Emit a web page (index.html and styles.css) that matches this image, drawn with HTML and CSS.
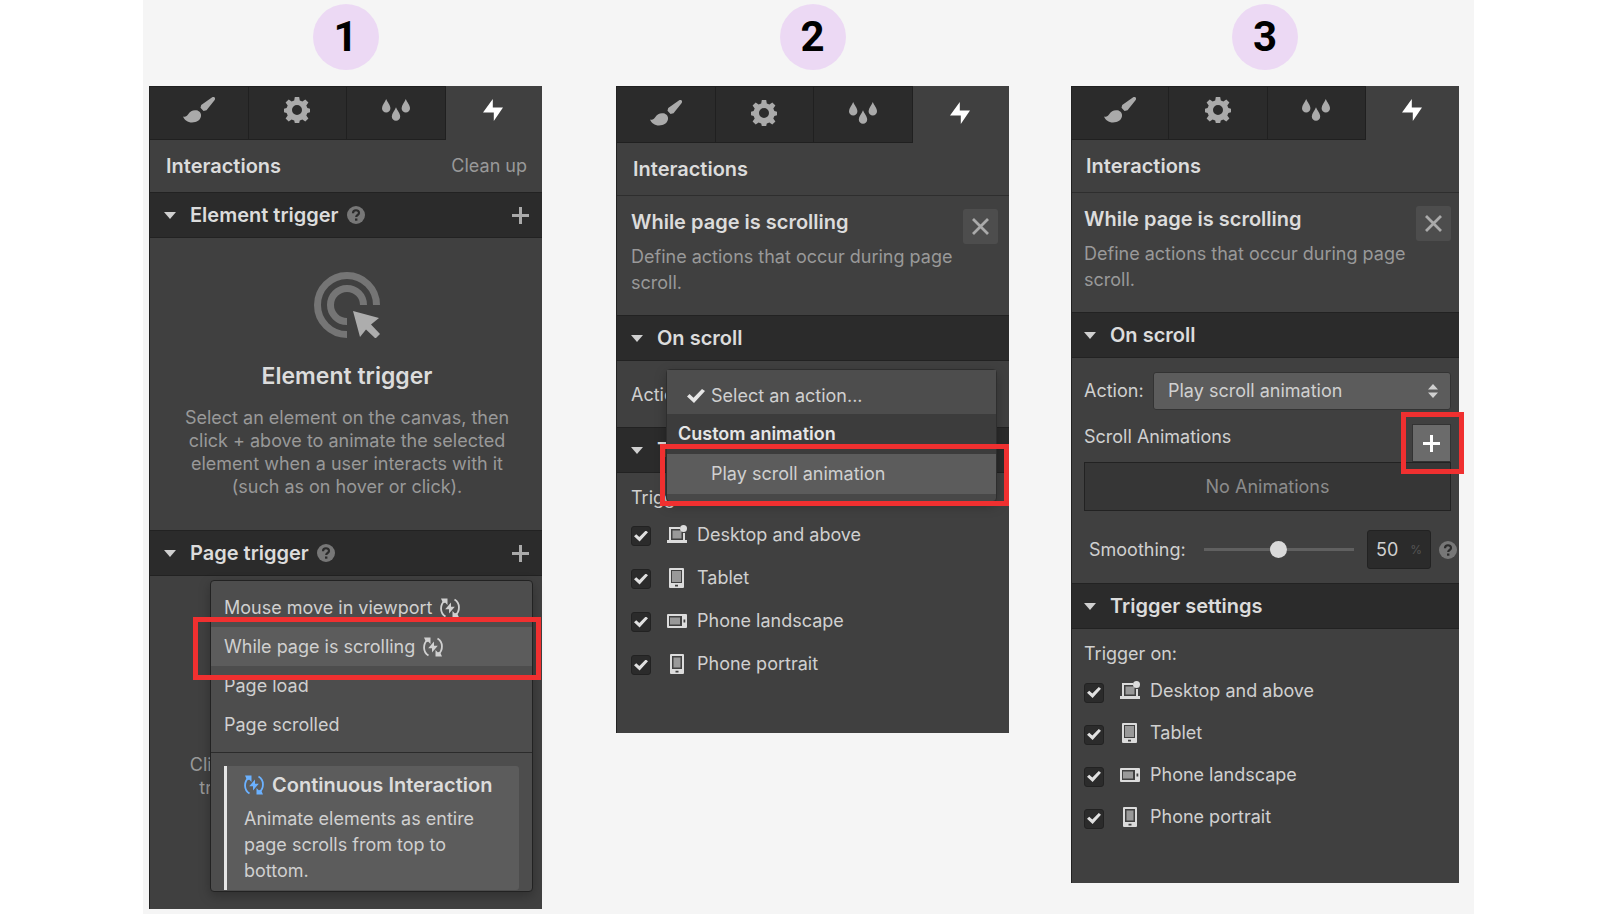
FILE: index.html
```html
<!DOCTYPE html>
<html lang="en">
<head>
  <meta charset="UTF-8">
  <meta name="viewport" content="width=device-width, initial-scale=1">
  <title>Interactions: while page is scrolling</title>
  <link rel="stylesheet" href="styles.css">
</head>
<body>

<!-- Shared icons -->
<svg class="sprite" aria-hidden="true">
  <symbol id="brush" viewBox="0 0 32 26">
    <path d="M31 0c1.600.8 1.200 2.200.5 3.200L23.500 13.200l-3 .8-3-3.200.7-2.700L28.500.8C29.300.1 30.200-.3 31 0z"/>
    <path d="M0 19.500c2.500.8 3.800-.2 5.200-2.200 2-3.300 5-4.600 8.200-4 3.600.7 5 3.500 4.600 6-.6 3.800-4.200 6.200-9 6.200-4.300 0-7.600-2.400-9-6z"/>
  </symbol>
  <symbol id="gear" viewBox="0 0 26 26">
    <path fill-rule="evenodd" d="M10.800 0h4.400l.6 3.500 2.600 1.100 2.900-2.100 3.100 3.100-2.100 2.900 1.100 2.600 2.600.6v3.600l-2.600.6-1.100 2.600 2.100 2.900-3.100 3.100-2.900-2.100-2.600 1.100-.6 2.500h-4.400l-.6-2.500-2.600-1.100-2.900 2.100-3.100-3.100 2.100-2.900-1.100-2.600-2.600-.6v-3.600l2.600-.6 1.100-2.600-2.100-2.900 3.100-3.100 2.900 2.100 2.600-1.100zM13 8a5 5 0 1 0 0 10 5 5 0 0 0 0-10z"/>
  </symbol>
  <symbol id="drops" viewBox="0 0 28 22">
    <path d="M4.200 0C5.500 3.500 8.400 6 8.400 9.300a4.200 4.300 0 0 1-8.400 0C0 6 2.900 3.500 4.200 0z"/>
    <path d="M14 8.200c1.300 3.500 4.200 6 4.200 9.300a4.200 4.300 0 0 1-8.400 0c0-3.300 2.900-5.800 4.200-9.300z"/>
    <path d="M23.800 0C25.100 3.500 28 6 28 9.300a4.200 4.300 0 0 1-8.400 0c0-3.300 2.900-5.800 4.200-9.300z"/>
  </symbol>
  <symbol id="bolt" viewBox="0 0 20 22">
    <path d="M9.800 0v8.500H20L10.800 22v-8.500H0z"/>
  </symbol>
  <symbol id="caret" viewBox="0 0 12 7">
    <path d="M0 0h12L6 7z"/>
  </symbol>
  <symbol id="plus" viewBox="0 0 17 17">
    <path d="M7 0h3v7h7v3h-7v7H7v-7H0V7h7z"/>
  </symbol>
  <symbol id="help" viewBox="0 0 18 18">
    <circle cx="9" cy="9" r="9" fill="#777"/>
    <path d="M6 7.200C6 3.300 12 3.300 12 7c0 2-2.800 2-2.800 4" fill="none" stroke="#2b2b2b" stroke-width="2.200"/>
    <path d="M8 12.500h2.400v2.200H8z" fill="#2b2b2b"/>
  </symbol>
  <symbol id="close" viewBox="0 0 17 17">
    <path d="M1 1l15 15M16 1L1 16" fill="none" stroke="currentColor" stroke-width="2.800"/>
  </symbol>
  <symbol id="tick" viewBox="0 0 18 14">
    <path d="M0 7.500L2.500 5l4 3.800L15 0l3 2L7 14z"/>
  </symbol>
  <symbol id="continuous" viewBox="0 0 20 20">
    <path d="M5.500 18.500C-.5 15 0 6.500 4.500 3M14.500 1.500c6 3.500 5.500 12 1 15.500" fill="none" stroke="currentColor" stroke-width="1.800"/>
    <path d="M1 .5h6.500V7L5.300 4.800 3 5zM19 19.500h-6.500V13l2.200 2.200L17 15z"/>
    <path d="M11 4.500v4.300h3.800L9 15.500v-4.300H5.200z"/>
  </symbol>
  <symbol id="desktop" viewBox="0 0 20 20">
    <path d="M2 2h11v2H4v11h12V8h2v7h2v3H0v-3h2z"/>
    <path d="M5.500 5.500h9v8h-9z" fill="#999"/>
    <circle cx="16.500" cy="3.500" r="3.500"/>
  </symbol>
  <symbol id="tablet" viewBox="0 0 20 20">
    <path fill-rule="evenodd" d="M3 0h13q1 0 1 1v18q0 1-1 1H3q-1 0-1-1V1q0-1 1-1zm1 2v13h11V2zm4 14.800v1.600h3v-1.600z"/>
    <path d="M5 3h9v11H5z" fill="#999"/>
  </symbol>
  <symbol id="landscape" viewBox="0 0 20 20">
    <path fill-rule="evenodd" d="M1 3h18q1 0 1 1v12q0 1-1 1H1q-1 0-1-1V4q0-1 1-1zm1 2v10h13V5zm14.500 3.500v3h1.800v-3z"/>
    <path d="M3 6.500h10v7H3z" fill="#999"/>
  </symbol>
  <symbol id="portrait" viewBox="0 0 20 20">
    <path fill-rule="evenodd" d="M4 0h12q1 0 1 1v18q0 1-1 1H4q-1 0-1-1V1q0-1 1-1zm1 2v13h10V2zm3.500 14.800v1.600h3v-1.600z"/>
    <path d="M6.500 3.500h7v10h-7z" fill="#999"/>
  </symbol>
</svg>

<main class="stage">

  <!-- Step 1 -->
  <section class="step step-one">
    <h2 class="badge">1</h2>
    <div class="panel">
      <nav class="tabs">
        <button class="tab" aria-label="Style"><svg class="icon-brush"><use href="#brush"/></svg></button>
        <button class="tab" aria-label="Settings"><svg class="icon-gear"><use href="#gear"/></svg></button>
        <button class="tab" aria-label="Effects"><svg class="icon-drops"><use href="#drops"/></svg></button>
        <button class="tab active" aria-label="Interactions"><svg class="icon-bolt"><use href="#bolt"/></svg></button>
      </nav>
      <div class="panel-title">
        <h3>Interactions</h3>
        <button class="clean-up">Clean up</button>
      </div>

      <div class="section-bar">
        <svg class="icon-caret"><use href="#caret"/></svg>
        <h4>Element trigger</h4>
        <svg class="icon-help"><use href="#help"/></svg>
        <button class="add" aria-label="Add element trigger"><svg class="icon-plus"><use href="#plus"/></svg></button>
      </div>
      <div class="empty">
        <svg class="target" viewBox="0 0 66 66">
          <path d="M33 62.500A29.500 29.500 0 1 1 62.500 33M33 49.500A16.500 16.500 0 1 1 49.500 33" fill="none" stroke="#757575" stroke-width="7"/>
          <path d="M39 39l26 7-8 6.500 9 9.500-4.500 4.500-9.500-9-6 7.500z" fill="#adadad"/>
        </svg>
        <h5>Element trigger</h5>
        <p>Select an element on the canvas, then click + above to animate the selected element when a user interacts with it (such as on hover or click).</p>
      </div>

      <div class="section-bar">
        <svg class="icon-caret"><use href="#caret"/></svg>
        <h4>Page trigger</h4>
        <svg class="icon-help"><use href="#help"/></svg>
        <button class="add" aria-label="Add page trigger"><svg class="icon-plus"><use href="#plus"/></svg></button>
      </div>
      <div class="page-trigger">
        <p class="hint">Click + above to animate the page or<br>trigger it when a user scrolls down</p>
        <div class="trigger-menu">
          <div class="trigger-list">
            <button class="trigger-item">Mouse move in viewport <svg class="icon-loop"><use href="#continuous"/></svg></button>
            <button class="trigger-item selected marked">While page is scrolling <svg class="icon-loop"><use href="#continuous"/></svg></button>
            <button class="trigger-item">Page load</button>
            <button class="trigger-item">Page scrolled</button>
          </div>
          <div class="info">
            <h5><svg class="icon-loop"><use href="#continuous"/></svg> Continuous Interaction</h5>
            <p>Animate elements as entire page scrolls from top to bottom.</p>
          </div>
        </div>
      </div>
    </div>
  </section>

  <!-- Step 2 -->
  <section class="step step-two">
    <h2 class="badge">2</h2>
    <div class="panel">
      <nav class="tabs">
        <button class="tab" aria-label="Style"><svg class="icon-brush"><use href="#brush"/></svg></button>
        <button class="tab" aria-label="Settings"><svg class="icon-gear"><use href="#gear"/></svg></button>
        <button class="tab" aria-label="Effects"><svg class="icon-drops"><use href="#drops"/></svg></button>
        <button class="tab active" aria-label="Interactions"><svg class="icon-bolt"><use href="#bolt"/></svg></button>
      </nav>
      <div class="panel-title">
        <h3>Interactions</h3>
      </div>
      <div class="about">
        <div>
          <h4>While page is scrolling</h4>
          <p>Define actions that occur during page scroll.</p>
        </div>
        <button class="close" aria-label="Close"><svg class="icon-plus"><use href="#close"/></svg></button>
      </div>

      <div class="section-bar">
        <svg class="icon-caret"><use href="#caret"/></svg>
        <h4>On scroll</h4>
      </div>
      <div class="action-open">
        <span>Action:</span>
        <div class="action-menu" role="listbox" aria-label="Action">
          <button class="action-item first" role="option" aria-selected="true"><svg class="icon-tick"><use href="#tick"/></svg>Select an action...</button>
          <div class="action-group">Custom animation</div>
          <button class="action-item selected marked" role="option" aria-selected="false">Play scroll animation</button>
        </div>
      </div>

      <div class="section-bar">
        <svg class="icon-caret"><use href="#caret"/></svg>
        <h4>Trigger settings</h4>
      </div>
      <div class="devices">
        <p>Trigger on:</p>
        <label><input type="checkbox" checked><svg class="icon-loop"><use href="#desktop"/></svg>Desktop and above</label>
        <label><input type="checkbox" checked><svg class="icon-loop"><use href="#tablet"/></svg>Tablet</label>
        <label><input type="checkbox" checked><svg class="icon-loop"><use href="#landscape"/></svg>Phone landscape</label>
        <label><input type="checkbox" checked><svg class="icon-loop"><use href="#portrait"/></svg>Phone portrait</label>
      </div>
    </div>
  </section>

  <!-- Step 3 -->
  <section class="step step-three">
    <h2 class="badge">3</h2>
    <div class="panel">
      <nav class="tabs">
        <button class="tab" aria-label="Style"><svg class="icon-brush"><use href="#brush"/></svg></button>
        <button class="tab" aria-label="Settings"><svg class="icon-gear"><use href="#gear"/></svg></button>
        <button class="tab" aria-label="Effects"><svg class="icon-drops"><use href="#drops"/></svg></button>
        <button class="tab active" aria-label="Interactions"><svg class="icon-bolt"><use href="#bolt"/></svg></button>
      </nav>
      <div class="panel-title">
        <h3>Interactions</h3>
      </div>
      <div class="about">
        <div>
          <h4>While page is scrolling</h4>
          <p>Define actions that occur during page scroll.</p>
        </div>
        <button class="close" aria-label="Close"><svg class="icon-plus"><use href="#close"/></svg></button>
      </div>

      <div class="section-bar">
        <svg class="icon-caret"><use href="#caret"/></svg>
        <h4>On scroll</h4>
      </div>
      <div class="scroll-settings">
        <div class="action-row">
          <label for="action">Action:</label>
          <div class="select">
            <select id="action">
              <option>Play scroll animation</option>
            </select>
            <svg class="arrows" viewBox="0 0 10 14"><path d="M5 0l5 5.500H0zM5 14l5-5.500H0z"/></svg>
          </div>
        </div>
        <div class="animations-row">
          <span>Scroll Animations</span>
          <button class="add-animation marked" aria-label="Add scroll animation"><svg class="icon-plus"><use href="#plus"/></svg></button>
        </div>
        <div class="no-animations">No Animations</div>
        <div class="smoothing-row">
          <label for="smoothing">Smoothing:</label>
          <input type="range" id="smoothing" min="0" max="100" value="50">
          <div class="percent">
            <input type="text" value="50" aria-label="Smoothing percent">
            <span>%</span>
          </div>
          <svg class="icon-help"><use href="#help"/></svg>
        </div>
      </div>

      <div class="section-bar">
        <svg class="icon-caret"><use href="#caret"/></svg>
        <h4>Trigger settings</h4>
      </div>
      <div class="devices">
        <p>Trigger on:</p>
        <label><input type="checkbox" checked><svg class="icon-loop"><use href="#desktop"/></svg>Desktop and above</label>
        <label><input type="checkbox" checked><svg class="icon-loop"><use href="#tablet"/></svg>Tablet</label>
        <label><input type="checkbox" checked><svg class="icon-loop"><use href="#landscape"/></svg>Phone landscape</label>
        <label><input type="checkbox" checked><svg class="icon-loop"><use href="#portrait"/></svg>Phone portrait</label>
      </div>
    </div>
  </section>

</main>

</body>
</html>
```

FILE: styles.css
```css
* {
  box-sizing: border-box;
}

body {
  margin: 0;
  display: grid;
  grid-template-columns: 143fr 1331fr 143fr;
  min-height: 100vh;
  background: #fff;
  color: #d0d0d0;
  font-family: Inter, "Liberation Sans", sans-serif;
  font-size: 18px;
  line-height: 26px;
}

h2, h3, h4, h5, p {
  margin: 0;
}

h3, h4 {
  font-size: 20px;
  font-weight: 600;
  color: #dcdcdc;
}

button, input, select {
  font: inherit;
  color: inherit;
  border: none;
  border-radius: 0;
  background: none;
  padding: 0;
  margin: 0;
}

button {
  cursor: pointer;
}

svg {
  fill: currentColor;
  flex: none;
  display: block;
}

.sprite {
  position: absolute;
  width: 0;
  height: 0;
}

/* Stage and steps */
.stage {
  grid-column: 2;
  display: grid;
  grid-template-columns: 6fr 393fr 74fr 393fr 62fr 388fr 15fr;
  align-items: start;
  background: #f5f5f5;
  padding: 4px 0;
}

.step-one { grid-column: 2; }
.step-two { grid-column: 4; }
.step-three { grid-column: 6; }

.badge {
  width: 66px;
  height: 66px;
  margin: 0 auto 16px;
  border-radius: 50%;
  background: #ecd9f4;
  color: #000;
  font-family: Roboto, sans-serif;
  font-size: 42px;
  font-weight: 700;
  line-height: 65px;
  text-align: center;
}

.panel {
  background: #404040;
  border-left: 1px solid #222;
}

/* Tabs */
.tabs {
  display: grid;
  grid-template-columns: 98fr 98fr 98fr 96fr;
  height: 54px;
}

.tab {
  display: flex;
  align-items: center;
  justify-content: center;
  padding-bottom: 6px;
  background: #2b2b2b;
  border: solid #202020;
  border-width: 1px 1px 1px 0;
  color: #aaa;
}

.step-two .tabs {
  height: 57px;
}

.step-two .tab {
  padding-bottom: 4px;
}

.step-three .tabs {
  grid-template-columns: 97fr 98fr 98fr 93fr;
}

.tab.active {
  background: #404040;
  border-color: #404040;
  color: #fff;
}

.icon-brush { width: 32px; height: 26px; }
.icon-gear { width: 26px; height: 26px; }
.icon-drops { width: 28px; height: 22px; }
.icon-bolt { width: 20px; height: 22px; }
.icon-caret { width: 12px; height: 7px; }
.icon-plus { width: 17px; height: 17px; }
.icon-help { width: 18px; height: 18px; }
.icon-tick { width: 18px; height: 14px; }
.icon-loop { width: 20px; height: 20px; }

.panel-title {
  display: flex;
  align-items: center;
  justify-content: space-between;
  height: 52px;
  padding: 0 15px 0 16px;
}

.step-three .panel-title {
  padding-left: 14px;
}

.clean-up {
  color: #999;
}

.section-bar {
  display: flex;
  align-items: center;
  height: 46px;
  padding: 0 13px 0 14px;
  background: #2b2b2b;
  border: solid #222;
  border-width: 1px 0;
}

.step-three .section-bar {
  padding-left: 12px;
}

.section-bar h4 {
  margin-left: 14px;
}

.section-bar .icon-help {
  margin-left: 8px;
}

.add {
  margin-left: auto;
  color: #aaa;
}

/* Element trigger */
.empty {
  padding: 34px 30px 32px 32px;
  text-align: center;
  color: #999;
}

.target {
  width: 66px;
  height: 66px;
  margin: 0 auto 23px;
}

.empty h5 {
  font-size: 23px;
  font-weight: 600;
  line-height: 30px;
  margin-bottom: 15px;
  color: #dcdcdc;
}

.empty p {
  line-height: 23px;
}

/* Page trigger */
.page-trigger {
  position: relative;
}

.hint {
  padding: 177px 32px 110px;
  line-height: 23px;
  text-align: center;
  color: #999;
}

.trigger-menu {
  position: absolute;
  top: 4px;
  left: 60px;
  right: 9px;
  background: #4d4d4d;
  border: 1px solid #222;
  border-radius: 4px;
  box-shadow: 0 4px 12px rgba(0, 0, 0, 0.25);
}

.trigger-list {
  padding: 7px 0 8px;
  border-bottom: 1px solid #2b2b2b;
}

.trigger-item {
  display: flex;
  align-items: center;
  gap: 8px;
  width: 100%;
  height: 39px;
  padding-left: 13px;
}

.trigger-item.selected,
.action-item.selected {
  background: #5c5c5c;
}

.marked {
  position: relative;
}

/* Red frame round the control to click */
.marked::after {
  content: "";
  position: absolute;
  border: 5px solid #f03030;
  pointer-events: none;
}

.trigger-item.marked::after {
  inset: -10px -9px -14px -18px;
}

.action-item.marked::after {
  inset: -10px -13px -12px -7px;
}

.add-animation.marked::after {
  inset: -13px -14px -13px -12px;
}

.info {
  margin: 13px 13px 1px;
  padding: 6px 12px 6px 17px;
  background: #5c5c5c;
  border-left: 3px solid #e6e6e6;
  border-radius: 0 3px 3px 0;
}

.info h5 {
  display: flex;
  align-items: center;
  gap: 8px;
  margin-bottom: 8px;
  font-size: 20px;
  font-weight: 600;
  color: #dcdcdc;
}

.info .icon-loop {
  color: #6bb1ff;
}

/* Trigger description */
.about {
  display: flex;
  align-items: flex-start;
  justify-content: space-between;
  padding: 13px 11px 19px 14px;
  border-top: 1px solid #2e2e2e;
}

.about h4 {
  margin-bottom: 9px;
}

.about p {
  color: #999;
}

.step-three .about {
  padding-left: 12px;
  padding-right: 8px;
}

.close {
  display: flex;
  flex: none;
  align-items: center;
  justify-content: center;
  width: 35px;
  height: 35px;
  background: #4d4d4d;
  border-radius: 3px;
  color: #aaa;
}

/* Opened action list */
.action-open {
  position: relative;
  padding: 21px 14px 19px;
}

.action-menu {
  position: absolute;
  z-index: 1;
  top: 8px;
  left: 49px;
  right: 12px;
  padding-bottom: 7px;
  background: #484848;
  border: 1px solid #2e2e2e;
  border-radius: 4px;
  box-shadow: 0 4px 12px rgba(0, 0, 0, 0.25);
}

.action-item {
  display: flex;
  align-items: center;
  width: 100%;
  height: 40px;
  padding-left: 44px;
}

.action-item.first {
  height: 44px;
  padding: 8px 0 0 20px;
  gap: 6px;
  background: #4d4d4d;
}

.action-item.first svg {
  color: #e6e6e6;
}

.action-group {
  height: 40px;
  padding: 7px 11px;
  background: #3c3c3c;
  font-weight: 600;
  color: #e6e6e6;
}

/* Scroll settings */
.scroll-settings {
  padding: 14px 8px 14px 12px;
}

.action-row {
  display: flex;
  align-items: center;
  justify-content: space-between;
}

.select {
  position: relative;
  width: 298px;
}

.select select {
  appearance: none;
  display: block;
  width: 100%;
  height: 38px;
  padding: 0 14px;
  background: #5c5c5c;
  border: 1px solid #333;
  border-radius: 3px;
}

.arrows {
  position: absolute;
  top: 12px;
  right: 13px;
  width: 10px;
  height: 14px;
  pointer-events: none;
}

.animations-row {
  display: flex;
  align-items: flex-start;
  justify-content: space-between;
  margin-top: 14px;
}

.add-animation {
  display: flex;
  align-items: center;
  justify-content: center;
  width: 39px;
  height: 38px;
  background: #6b6b6b;
  border: 1px solid #333;
  color: #fff;
}

.no-animations {
  height: 49px;
  line-height: 47px;
  border: 1px solid #222;
  background: #363636;
  text-align: center;
  color: #8c8c8c;
}

.smoothing-row {
  display: flex;
  align-items: center;
  margin: 19px -6px 0 5px;
}

.smoothing-row > input {
  appearance: none;
  flex: 1;
  min-width: 0;
  height: 18px;
  margin: 0 13px 0 18px;
}

.smoothing-row > input::-webkit-slider-runnable-track {
  height: 3px;
  background: #606060;
}

.smoothing-row > input::-webkit-slider-thumb {
  appearance: none;
  width: 17px;
  height: 17px;
  margin-top: -7px;
  border-radius: 50%;
  background: #d9d9d9;
}

.percent {
  display: flex;
  align-items: center;
  width: 64px;
  height: 39px;
  padding: 0 8px;
  background: #2b2b2b;
  border: 1px solid #222;
  border-radius: 3px;
}

.percent input {
  width: 100%;
  min-width: 0;
}

.percent span {
  font-size: 12px;
  color: #555;
}

.smoothing-row .icon-help {
  margin-left: 8px;
}

/* Devices */
.devices {
  padding: 12px 14px 48px;
}

.devices p {
  margin-bottom: 2px;
}

.devices label {
  display: flex;
  align-items: center;
  height: 43px;
}

.step-three .devices {
  padding: 12px 12px 45px;
}

.step-three .devices p {
  margin-bottom: 3px;
}

.step-three .devices label {
  height: 42px;
}

.devices label svg {
  margin: 0 10px 0 16px;
  color: #dcdcdc;
}

.devices input {
  appearance: none;
  display: flex;
  align-items: center;
  justify-content: center;
  width: 20px;
  height: 20px;
  margin-top: 3px;
  background: #2b2b2b;
  border: 1px solid #222;
  border-radius: 3px;
}

.devices input:checked::before {
  content: "";
  width: 14px;
  height: 11px;
  background: #e0e0e0;
  clip-path: polygon(0 52%, 16% 34%, 38% 58%, 84% 0, 100% 16%, 40% 100%);
}
```
